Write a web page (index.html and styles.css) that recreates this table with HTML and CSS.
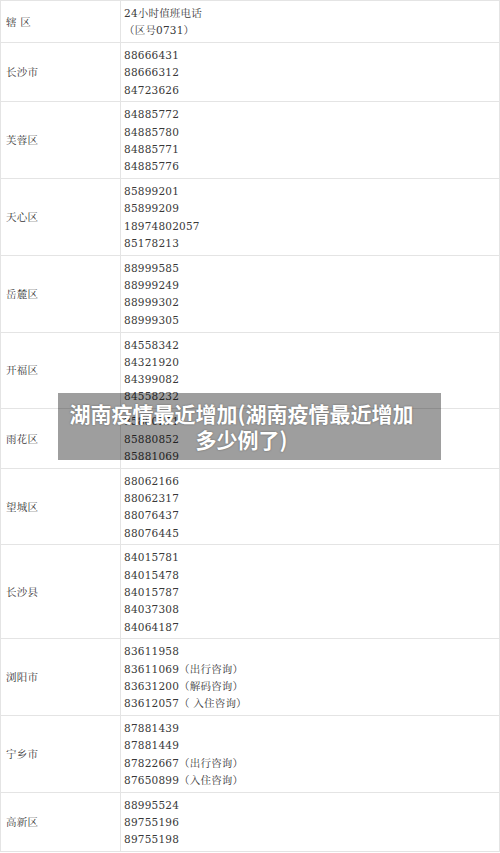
FILE: index.html
```html
<!DOCTYPE html>
<html lang="zh-CN">
<head>
<meta charset="utf-8">
<title>湖南疫情最近增加</title>
<link rel="stylesheet" href="styles.css">
</head>
<body>
<div class="page">
  <table class="hotline">
    <tbody>
      <tr>
        <td class="area">辖 区</td>
        <td class="nums"><div>24小时值班电话</div><div>（区号0731）</div></td>
      </tr>
      <tr>
        <td class="area">长沙市</td>
        <td class="nums"><div>88666431</div><div>88666312</div><div>84723626</div></td>
      </tr>
      <tr>
        <td class="area">芙蓉区</td>
        <td class="nums"><div>84885772</div><div>84885780</div><div>84885771</div><div>84885776</div></td>
      </tr>
      <tr>
        <td class="area">天心区</td>
        <td class="nums"><div>85899201</div><div>85899209</div><div>18974802057</div><div>85178213</div></td>
      </tr>
      <tr>
        <td class="area">岳麓区</td>
        <td class="nums"><div>88999585</div><div>88999249</div><div>88999302</div><div>88999305</div></td>
      </tr>
      <tr>
        <td class="area">开福区</td>
        <td class="nums"><div>84558342</div><div>84321920</div><div>84399082</div><div>84558232</div></td>
      </tr>
      <tr>
        <td class="area">雨花区</td>
        <td class="nums"><div>85880271</div><div>85880852</div><div>85881069</div></td>
      </tr>
      <tr>
        <td class="area">望城区</td>
        <td class="nums"><div>88062166</div><div>88062317</div><div>88076437</div><div>88076445</div></td>
      </tr>
      <tr>
        <td class="area">长沙县</td>
        <td class="nums"><div>84015781</div><div>84015478</div><div>84015787</div><div>84037308</div><div>84064187</div></td>
      </tr>
      <tr>
        <td class="area">浏阳市</td>
        <td class="nums"><div>83611958</div><div>83611069（出行咨询）</div><div>83631200（解码咨询）</div><div>83612057（ 入住咨询）</div></td>
      </tr>
      <tr>
        <td class="area">宁乡市</td>
        <td class="nums"><div>87881439</div><div>87881449</div><div>87822667（出行咨询）</div><div>87650899（入住咨询）</div></td>
      </tr>
      <tr>
        <td class="area">高新区</td>
        <td class="nums"><div>88995524</div><div>89755196</div><div>89755198</div></td>
      </tr>
    </tbody>
  </table>
  <div class="caption">湖南疫情最近增加(湖南疫情最近增加多少例了)</div>
</div>
</body>
</html>
```
FILE: styles.css
```css
html, body {
  margin: 0;
  padding: 0;
  background: #ffffff;
}

.page {
  position: relative;
  width: 500px;
  height: 853px;
  overflow: hidden;
}

.hotline {
  width: 500px;
  border-collapse: collapse;
  table-layout: fixed;
  font-family: "DejaVu Serif", "Noto Serif CJK SC", "Noto Sans CJK SC", serif;
  font-size: 10.5px;
  letter-spacing: 0.2px;
  color: #383838;
}

.hotline td {
  border: 1px solid #e4e4e4;
  line-height: 17.3px;
  padding: 4px 0 2.5px;
}

.hotline .area {
  width: 114px;
  padding-left: 5px;
  vertical-align: middle;
}

.hotline .nums {
  padding-left: 3px;
  vertical-align: top;
}

.caption {
  position: absolute;
  left: 58px;
  top: 393px;
  width: 383px;
  height: 67px;
  box-sizing: border-box;
  padding: 7px 20px 7px 4px;
  background: rgba(0, 0, 0, 0.38);
  color: #ffffff;
  font-family: "Noto Sans CJK SC", "Noto Sans", sans-serif;
  font-weight: 700;
  font-size: 21px;
  line-height: 26px;
  text-align: center;
  text-shadow: 0 0 2px rgba(0, 0, 0, 0.4);
}
```
